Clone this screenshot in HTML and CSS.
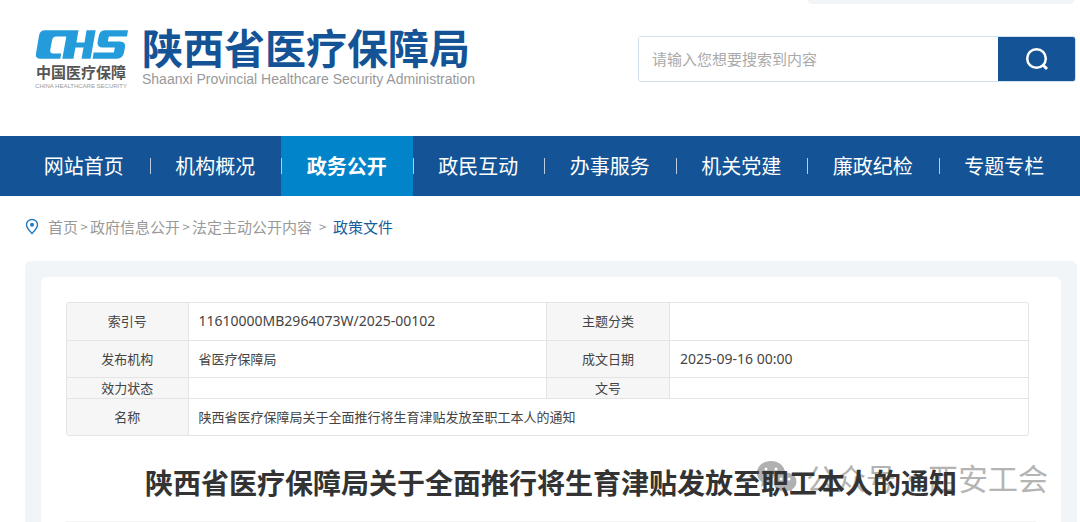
FILE: index.html
```html
<!DOCTYPE html>
<html lang="zh-CN">
<head>
<meta charset="utf-8">
<title>陕西省医疗保障局</title>
<link rel="stylesheet" href="styles.css">
</head>
<body>
<header class="header">
  <div class="topbar"></div>
  <div class="brand">
    <div class="emblem">
      <svg class="emblem-mark" viewBox="0 0 92 29" role="img" aria-label="CHS">
        <g fill="#249cdb">
          <path d="M10 0H43L41 12H49L51 0H60L55 28H46L48 17H40L38 28H27L31 6H21Q18 6 17 9L15 20Q15 23 18 23H26L25 28H5Q0 28 1 23L4 5Q5 0 10 0Z"/>
          <path d="M69 0H92L91 6H73L72 11H84Q90 11 89 17L88 22Q87 28 81 28H57L58 22H78L79 17H67Q61 17 62 11L63 6Q64 0 69 0Z"/>
        </g>
      </svg>
      <span class="emblem-name">中国医疗保障</span>
      <span class="emblem-sub">CHINA HEALTHCARE SECURITY</span>
    </div>
    <div class="agency">
      <h1 class="agency-name">陕西省医疗保障局</h1>
      <span class="agency-en">Shaanxi Provincial Healthcare Security Administration</span>
    </div>
  </div>
  <form class="search" role="search">
    <input class="search-input" type="text" aria-label="搜索" placeholder="请输入您想要搜索到内容">
    <button class="search-button" type="button" aria-label="搜索">
      <svg width="24" height="24" viewBox="0 0 24 24" fill="none" stroke="#fff" stroke-width="2.5"><circle cx="11.500" cy="11.500" r="9.300"/><path d="M17.500 17.500L22 22" stroke-width="3"/></svg>
    </button>
  </form>
</header>
<nav class="nav">
  <a class="nav-item" href="#">网站首页</a>
  <a class="nav-item" href="#">机构概况</a>
  <a class="nav-item active" href="#">政务公开</a>
  <a class="nav-item" href="#">政民互动</a>
  <a class="nav-item" href="#">办事服务</a>
  <a class="nav-item" href="#">机关党建</a>
  <a class="nav-item" href="#">廉政纪检</a>
  <a class="nav-item" href="#">专题专栏</a>
</nav>
<div class="crumbs">
  <svg class="pin" width="14" height="17" viewBox="0 0 14 17"><path d="M7 1.500C3.800 1.500 1.500 3.900 1.500 6.800C1.500 10 5 13.500 7 15.500C9 13.500 12.500 10 12.500 6.800C12.500 3.900 10.200 1.500 7 1.500Z" fill="none" stroke="#1f7cc4" stroke-width="1.400"/><circle cx="7" cy="6.800" r="2" fill="#1f7cc4"/></svg>
  <a href="#">首页</a><span class="sep">&gt;</span><a href="#">政府信息公开</a><span class="sep">&gt;</span><a href="#">法定主动公开内容</a><span class="sep wide">&gt;</span><a class="current" href="#">政策文件</a>
</div>
<main class="frame">
  <article class="panel">
    <div class="table-wrap">
      <table class="meta">
        <colgroup><col class="c-first"><col><col class="c-label"><col></colgroup>
        <tr><th scope="row">索引号</th><td class="code">11610000MB2964073W/2025-00102</td><th scope="row">主题分类</th><td></td></tr>
        <tr><th scope="row">发布机构</th><td>省医疗保障局</td><th scope="row">成文日期</th><td class="code">2025-09-16 00:00</td></tr>
        <tr class="tight"><th scope="row">效力状态</th><td></td><th scope="row">文号</th><td></td></tr>
        <tr><th scope="row">名称</th><td colspan="3">陕西省医疗保障局关于全面推行将生育津贴发放至职工本人的通知</td></tr>
      </table>
    </div>
    <div class="headline">
      <div class="watermark">
        <svg width="42" height="34" viewBox="0 0 42 34" fill="#b0b0b0"><path d="M15 1C7 1 1 6 1 13C1 17 3 20 6 22L5 27L10 24Q12 25 15 25C23 25 29 20 29 13S23 1 15 1Z"/><path d="M29 12C22 12 17 16 17 22S22 32 29 32Q31 32 33 31L37 33L36 30C39 28 41 25 41 22C41 16 36 12 29 12Z" stroke="#fff"/><g fill="#fff"><circle cx="10" cy="9" r="1.500"/><circle cx="20" cy="9" r="1.500"/><circle cx="25" cy="19" r="1.500"/><circle cx="33" cy="19" r="1.500"/></g></svg>
        <span class="watermark-text"><span>公众号</span><span class="dot">·</span><span>西安工会</span></span>
      </div>
      <h2 class="title">陕西省医疗保障局关于全面推行将生育津贴发放至职工本人的通知</h2>
    </div>
  </article>
</main>
</body>
</html>
```
FILE: styles.css
```css
* { box-sizing: border-box; }
body { margin: 0; background: #fff; color: #444; font-family: "Noto Sans", "Noto Sans CJK SC", sans-serif; }
a { color: inherit; text-decoration: none; }
.header { position: relative; display: flex; justify-content: space-between; align-items: flex-start; height: 136px; padding: 24px 4px 0 34px; }
.topbar { position: absolute; top: 0; right: 6px; width: 266px; height: 4px; background: #f1f5f8; border-radius: 0 0 12px 12px; }
.brand { display: flex; gap: 14px; }
.emblem { display: flex; flex-direction: column; align-items: center; width: 94px; padding-top: 6px; white-space: nowrap; }
.emblem-mark { width: 93px; height: 30px; }
.emblem-name { font: 700 15px/24px "Noto Sans CJK SC", sans-serif; color: #555; }
.emblem-sub { font: 6px/4px "Liberation Sans", sans-serif; color: #999; }
.agency { display: flex; flex-direction: column; }
.agency-name { margin: 0; font: 700 41px/44px "Noto Sans CJK SC", sans-serif; color: #145496; }
.agency-en { font: 14px/22px "Liberation Sans", sans-serif; color: #999; }
.search { display: flex; width: 438px; height: 46px; margin-top: 12px; border: 1px solid #cfe0ef; border-radius: 3px; overflow: hidden; }
.search-input { flex: 1; min-width: 0; border: 0; padding: 0 13px 2px; font: 15px "Noto Sans CJK SC", sans-serif; outline: 0; }
.search-input::placeholder { color: #aaa; opacity: 1; }
.search-button { display: flex; align-items: center; justify-content: center; width: 77px; border: 0; background: #145496; padding: 0; }
.nav { display: flex; height: 60px; padding: 0 10px 0 18px; background: #145496; }
.nav-item { position: relative; flex: 1; color: #fff; text-align: center; font: 400 20px/60px "Noto Sans CJK SC", sans-serif; }
.nav-item + .nav-item::before { content: ""; position: absolute; left: 0; top: 22px; width: 1px; height: 16px; background: #b9cce0; }
.nav-item.active { background: #0284ca; font-weight: 700; }
.crumbs { display: flex; align-items: center; height: 65px; padding: 0 0 4px 25px; font: 15px/24px "Noto Sans CJK SC", sans-serif; color: #999; }
.pin { margin-right: 9px; }
.sep { width: 12px; text-align: center; font-size: 13px; }
.sep.wide { width: 21px; }
.current { color: #145e9e; }
.frame { margin: 0 3px 0 25px; padding: 16px 16px 0; background: #f1f5f8; border-radius: 6px 6px 0 0; }
.panel { padding: 25px 25px 0; background: #fff; border-radius: 6px 6px 0 0; }
.table-wrap { margin-right: 7px; border: 1px solid #e4e4e4; border-radius: 3px; overflow: hidden; }
.meta { width: 100%; table-layout: fixed; border-collapse: collapse; font-size: 13px; line-height: 20px; color: #444; }
.c-first { width: 121px; }
.c-label { width: 123px; }
.meta th, .meta td { height: 37px; padding: 0 10px; border: 1px solid #e4e4e4; font-weight: 400; text-align: left; }
.meta th { background: #f6f6f6; text-align: center; }
.meta .code { font-size: 14px; }
.meta tr:first-child > * { border-top: 0; }
.meta tr:last-child > * { border-bottom: 0; }
.meta tr > :first-child { border-left: 0; }
.meta tr > :last-child { border-right: 0; }
.meta .tight > * { height: 21px; }
.headline { position: relative; border-bottom: 1px solid #f4f4f4; padding: 24px 0 17px; }
.title { position: relative; margin: 0; text-align: center; font: 700 28px/44px "Noto Sans CJK SC", sans-serif; color: #333; }
.watermark { position: absolute; right: -12px; top: 19px; display: flex; align-items: center; gap: 8px; font: 400 30px/44px "Noto Sans CJK SC", sans-serif; color: #b4b4b4; white-space: nowrap; }
.watermark-text { display: flex; }
.dot { width: 32px; text-align: center; }
```
